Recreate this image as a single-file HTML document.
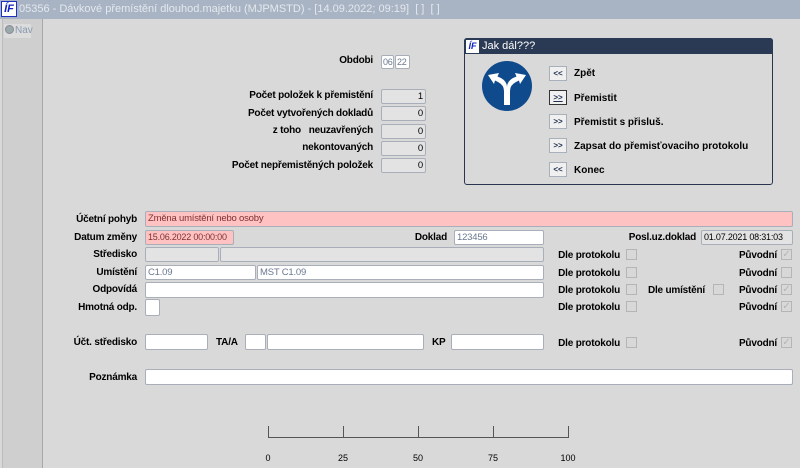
<!DOCTYPE html>
<html><head><meta charset="utf-8"><style>
body{margin:0;width:800px;height:468px;background:#d9d9d9;position:relative;overflow:hidden;font-family:"Liberation Sans",sans-serif;font-size:10px;color:#000}
div{position:absolute;box-sizing:border-box}
.l{font-weight:bold;text-align:right;white-space:nowrap;letter-spacing:-0.2px}
.f{background:#fff;border:1px solid #a9afb8;border-radius:2px;font-size:9.5px;color:#6a7890;padding:1px 2px;line-height:11px;white-space:nowrap;overflow:hidden;letter-spacing:-0.2px}
.g{background:#e3e3e3}
.p{background:#ffc2c2;color:#803030}
.n{background:#e3e3e3;text-align:right;color:#000}
.c{width:11px;height:11px;border:1px solid #b5b5b5;background:#d8d8d8}
.ck{color:#b5b5b5;font-size:10px;line-height:9px;text-align:center}
.b{width:18px;height:15px;border:1px solid #a8b0bc;background:#f0f0f0;font-size:8px;font-weight:bold;text-align:center;line-height:13px;color:#203050}
.bl{font-weight:bold;font-size:10px}
</style></head><body>
<div style="left:0;top:0;width:800px;height:19px;background:#a8b4c4"></div>
<div style="left:1px;top:1px;width:16px;height:16px;background:#fff;border:1px solid #2030c0;color:#1020c0;font-weight:bold;font-style:italic;font-size:11px;line-height:14px;text-align:center">ÍF</div>
<div style="left:19px;top:3px;color:#e4e8ee;font-size:11px;white-space:nowrap">05356 - Dávkové přemístění dlouhod.majetku (MJPMSTD) - [14.09.2022; 09:19]&nbsp; [ ]&nbsp; [ ]</div>
<div style="left:2px;top:19px;width:41px;height:449px;background:#cfcfcf;border-right:1px solid #a8a8a8;border-left:1px solid #bcbcbc"></div>
<div style="left:4px;top:24px;width:27px;height:14px;background:#dcdcdc"></div>
<div style="left:4px;top:24px;width:34px;height:14px;color:#8a9ab0;font-size:10px;line-height:14px;white-space:nowrap"><span style="display:inline-block;width:7px;height:7px;border-radius:50%;background:#9aa;border:1px solid #889;margin:0 1px 0 1px;vertical-align:-1px"></span>Nav</div>

<div class="l" style="right:427px;top:55px">Obdobi</div>
<div class="f" style="left:381px;top:55px;width:13px;height:14px;padding:1px;font-size:9px">06</div>
<div class="f" style="left:395px;top:55px;width:15px;height:14px;padding:1px;font-size:9px">22</div>

<div class="l" style="right:427px;top:90px">Počet položek k přemistění</div>
<div class="l" style="right:427px;top:108px">Počet vytvořených dokladů</div>
<div class="l" style="right:427px;top:125px">z toho &nbsp;&nbsp;neuzavřených</div>
<div class="l" style="right:427px;top:142px">nekontovaných</div>
<div class="l" style="right:427px;top:160px">Počet nepřemistěných položek</div>
<div class="f n" style="left:381px;top:89px;width:45px;height:15px">1</div>
<div class="f n" style="left:381px;top:106px;width:45px;height:15px">0</div>
<div class="f n" style="left:381px;top:124px;width:45px;height:15px">0</div>
<div class="f n" style="left:381px;top:141px;width:45px;height:15px">0</div>
<div class="f n" style="left:381px;top:158px;width:45px;height:15px">0</div>

<div style="left:464px;top:38px;width:309px;height:147px;border:1px solid #2a3650;border-radius:3px;background:#d9d9d9"></div>
<div style="left:464px;top:38px;width:309px;height:16px;background:#2a3a55;border-radius:3px 3px 0 0"></div>
<div style="left:466px;top:40px;width:13px;height:13px;background:#fff;color:#1020c0;font-weight:bold;font-style:italic;font-size:9px;line-height:12px;text-align:center">ÍF</div>
<div style="left:482px;top:40px;color:#fff;font-size:11px">Jak dál???</div>
<svg style="position:absolute;left:482px;top:61px" width="50" height="50" viewBox="0 0 50 50"><circle cx="25" cy="25" r="25" fill="#0e4a8c"/><path d="M22 44V30Q22 24 16 21L13 19.5 12 23 6 14 17 12 15.5 15.5 19 17Q25 20.5 25 26 25 20.5 31 17L34.5 15.5 33 12 44 14 38 23 37 19.5 34 21Q28 24 28 30V44Z" fill="#fff"/></svg>
<div class="b" style="left:549px;top:66px">&lt;&lt;</div><div class="bl" style="left:574px;top:68px">Zpět</div>
<div class="b" style="left:549px;top:90px;border-color:#333"><u>&gt;&gt;</u></div><div class="bl" style="left:574px;top:93px">Přemistit</div>
<div class="b" style="left:549px;top:114px">&gt;&gt;</div><div class="bl" style="left:574px;top:117px">Přemistit s přisluš.</div>
<div class="b" style="left:549px;top:138px">&gt;&gt;</div><div class="bl" style="left:574px;top:141px">Zapsat do přemisťovaciho protokolu</div>
<div class="b" style="left:549px;top:162px">&lt;&lt;</div><div class="bl" style="left:574px;top:165px">Konec</div>

<div class="l" style="right:663px;top:214px">Účetní pohyb</div>
<div class="f p" style="left:145px;top:211px;width:648px;height:16px">Změna umístění nebo osoby</div>
<div class="l" style="right:663px;top:232px">Datum změny</div>
<div class="f p" style="left:145px;top:230px;width:89px;height:15px;font-size:9px">15.06.2022 00:00:00</div>
<div class="l" style="right:353px;top:232px">Doklad</div>
<div class="f" style="left:454px;top:230px;width:90px;height:15px">123456</div>
<div class="l" style="right:104px;top:232px">Posl.uz.doklad</div>
<div class="f g" style="left:701px;top:230px;width:92px;height:15px;color:#000;font-size:9px">01.07.2021 08:31:03</div>

<div class="l" style="right:663px;top:249px">Středisko</div>
<div class="f g" style="left:145px;top:247px;width:74px;height:15px"></div>
<div class="f g" style="left:220px;top:247px;width:324px;height:15px"></div>
<div class="l" style="right:663px;top:267px">Umístění</div>
<div class="f" style="left:145px;top:265px;width:111px;height:15px">C1.09</div>
<div class="f" style="left:257px;top:265px;width:287px;height:15px">MST C1.09</div>
<div class="l" style="right:663px;top:284px">Odpovídá</div>
<div class="f" style="left:145px;top:282px;width:399px;height:16px"></div>
<div class="l" style="right:663px;top:302px">Hmotná odp.</div>
<div class="f" style="left:145px;top:299px;width:15px;height:17px"></div>

<div class="l" style="right:180px;top:250px">Dle protokolu</div><div class="c" style="left:626px;top:249px"></div>
<div class="l" style="right:180px;top:268px">Dle protokolu</div><div class="c" style="left:626px;top:267px"></div>
<div class="l" style="right:180px;top:285px">Dle protokolu</div><div class="c" style="left:626px;top:284px"></div>
<div class="l" style="right:180px;top:302px">Dle protokolu</div><div class="c" style="left:626px;top:301px"></div>
<div class="l" style="right:180px;top:338px">Dle protokolu</div><div class="c" style="left:626px;top:337px"></div>
<div class="l" style="right:95px;top:285px">Dle umístění</div><div class="c" style="left:713px;top:284px"></div>
<div class="l" style="right:23px;top:250px">Původní</div><div class="c ck" style="left:781px;top:249px">✓</div>
<div class="l" style="right:23px;top:268px">Původní</div><div class="c" style="left:781px;top:267px"></div>
<div class="l" style="right:23px;top:285px">Původní</div><div class="c ck" style="left:781px;top:284px">✓</div>
<div class="l" style="right:23px;top:302px">Původní</div><div class="c ck" style="left:781px;top:301px">✓</div>
<div class="l" style="right:23px;top:338px">Původní</div><div class="c ck" style="left:781px;top:337px">✓</div>

<div class="l" style="right:663px;top:337px">Účt. středisko</div>
<div class="f" style="left:145px;top:334px;width:63px;height:16px"></div>
<div class="l" style="left:216px;top:337px">TA/A</div>
<div class="f" style="left:245px;top:334px;width:21px;height:16px"></div>
<div class="f" style="left:267px;top:334px;width:157px;height:16px"></div>
<div class="l" style="left:432px;top:337px">KP</div>
<div class="f" style="left:451px;top:334px;width:93px;height:16px"></div>

<div class="l" style="right:663px;top:372px">Poznámka</div>
<div class="f" style="left:145px;top:369px;width:648px;height:16px"></div>

<svg style="position:absolute;left:260px;top:420px" width="320" height="48"><g stroke="#555" stroke-width="1"><line x1="8.5" y1="17.5" x2="308.5" y2="17.5"/><line x1="8.5" y1="6" x2="8.5" y2="18"/><line x1="83.5" y1="6" x2="83.5" y2="18"/><line x1="158.5" y1="6" x2="158.5" y2="18"/><line x1="233.5" y1="6" x2="233.5" y2="18"/><line x1="308.5" y1="6" x2="308.5" y2="18"/></g><g font-family="Liberation Sans" font-size="9" text-anchor="middle" fill="#000"><text x="8" y="41">0</text><text x="83" y="41">25</text><text x="158" y="41">50</text><text x="233" y="41">75</text><text x="308" y="41">100</text></g></svg>
</body></html>
